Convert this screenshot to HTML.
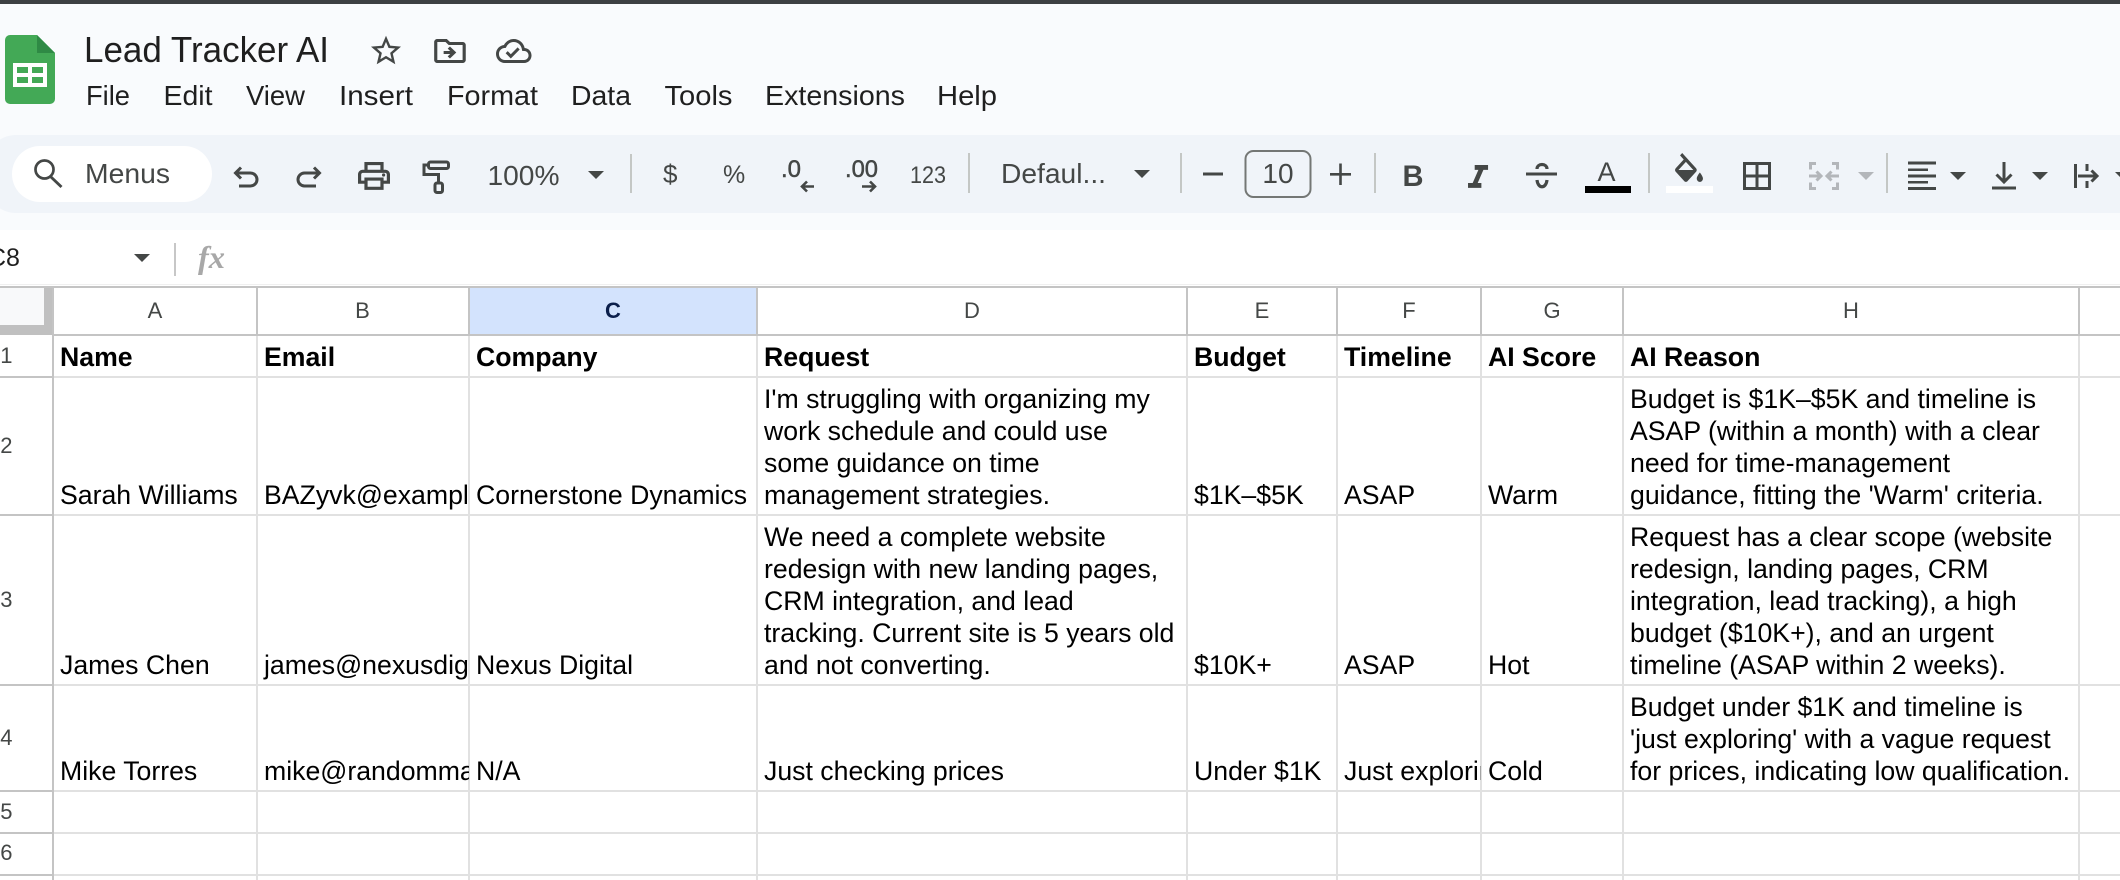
<!DOCTYPE html>
<html lang="en"><head><meta charset="utf-8"><title>Lead Tracker AI</title>
<style>
html,body{margin:0;padding:0;background:#fff;width:2120px;height:880px;overflow:hidden}
svg{display:block;position:absolute;left:0;top:0}
text{font-family:"Liberation Sans",Arial,sans-serif;white-space:pre}
.c{font-size:26.67px;fill:#000}
.b{font-weight:700}
.m{font-size:28px;fill:#1f1f1f}
.t{fill:#444746;font-size:28px}
.h{font-size:22px;fill:#444746;text-anchor:middle}
.r{font-size:22px;fill:#444746;text-anchor:end}
.i{fill:#444746}
.s{fill:none;stroke:#444746;stroke-width:3}
.g{fill:none;stroke:#b3b6ba;stroke-width:3}
</style></head><body>
<svg width="2120" height="880" viewBox="0 0 2120 880" xmlns="http://www.w3.org/2000/svg">
<defs>
<clipPath id="cb"><rect x="257" y="286" width="212" height="594"/></clipPath>
<clipPath id="cf"><rect x="1337" y="286" width="144" height="594"/></clipPath>
</defs>
<rect width="2120" height="880" fill="#fff"/>
<rect y="4" width="2120" height="226" fill="#f9fbfd"/>
<rect width="2120" height="4" fill="#3d4043"/>
<rect x="-14" y="135" width="2200" height="78" rx="30" fill="#f0f4f9"/>
<rect x="12" y="146" width="200" height="56" rx="28" fill="#fff"/>

<!-- logo -->
<path d="M10 35H37L55 53V99a5 5 0 0 1-5 5H10a5 5 0 0 1-5-5V40a5 5 0 0 1 5-5Z" fill="#43a956"/>
<path d="M37 35L55 53H37Z" fill="#2f8a45"/>
<path d="M13 63H47V87H13Z" fill="#fff"/>
<path d="M17 67H28V73H17ZM32 67H43V73H32ZM17 77H28V83H17ZM32 77H43V83H32Z" fill="#43a956"/>

<!-- title + menus -->
<text x="84" y="62" font-size="36" fill="#1f1f1f" textLength="245" lengthAdjust="spacingAndGlyphs">Lead Tracker AI</text>
<text class="m" x="86" y="105" textLength="44" lengthAdjust="spacingAndGlyphs">File</text>
<text class="m" x="163.500" y="105" textLength="49" lengthAdjust="spacingAndGlyphs">Edit</text>
<text class="m" x="246" y="105" textLength="59" lengthAdjust="spacingAndGlyphs">View</text>
<text class="m" x="339" y="105" textLength="74" lengthAdjust="spacingAndGlyphs">Insert</text>
<text class="m" x="447" y="105" textLength="91" lengthAdjust="spacingAndGlyphs">Format</text>
<text class="m" x="571" y="105" textLength="60" lengthAdjust="spacingAndGlyphs">Data</text>
<text class="m" x="664.500" y="105" textLength="68" lengthAdjust="spacingAndGlyphs">Tools</text>
<text class="m" x="765" y="105" textLength="140" lengthAdjust="spacingAndGlyphs">Extensions</text>
<text class="m" x="937" y="105" textLength="60" lengthAdjust="spacingAndGlyphs">Help</text>

<!-- title icons -->
<path class="i" transform="translate(368 32.75) scale(1.5)" d="M22 9.24l-7.19-.62L12 2 9.19 8.63 2 9.24l5.46 4.73L5.82 21 12 17.27 18.18 21l-1.63-7.03L22 9.24zM12 15.4l-3.76 2.27 1-4.28-3.32-2.88 4.38-.38L12 6.1l1.71 4.04 4.38.38-3.32 2.88 1 4.28L12 15.4z"/>
<path class="i" transform="translate(431 33) scale(1.58 1.5)" d="M20 6h-8l-2-2H4c-1.1 0-2 .9-2 2v12c0 1.1.9 2 2 2h16c1.1 0 2-.9 2-2V8c0-1.1-.9-2-2-2zm0 12H4V6h5.17l2 2H20v10zm-8.01-9l-1.41 1.41L12.16 12H8v2h4.16l-1.59 1.59L11.99 17 16 13.01 11.99 9z"/>
<path class="i" transform="translate(496 33) scale(1.48 1.5)" d="M19.35 10.04C18.67 6.59 15.64 4 12 4 9.11 4 6.6 5.64 5.35 8.04 2.34 8.36 0 10.91 0 14c0 3.31 2.69 6 6 6h13c2.76 0 5-2.24 5-5 0-2.64-2.05-4.78-4.65-4.96zM19 18H6c-2.21 0-4-1.79-4-4 0-2.05 1.53-3.76 3.56-3.97l1.07-.11.5-.95C8.08 7.14 9.94 6 12 6c2.62 0 4.88 1.86 5.39 4.43l.3 1.5 1.53.11c1.56.1 2.78 1.41 2.78 2.96 0 1.65-1.35 3-3 3zm-9-3.82l-2.09-2.09L6.5 13.5 10 17l6.01-6.01-1.41-1.41z"/>

<!-- toolbar -->
<circle cx="44.500" cy="169.500" r="9" fill="none" stroke="#444746" stroke-width="2.700"/>
<path class="s" d="M51 177l10.500 10" style="stroke-width:2.900"/>
<text class="t" x="85" y="183" textLength="85" lengthAdjust="spacingAndGlyphs">Menus</text>
<path class="s" d="M241 167.500l-5.500 5.500 5.500 5.500M236 173h14.500a6.500 6.500 0 0 1 0 13H239"/>
<path class="s" d="M314 167.500l5.500 5.500-5.500 5.500M319 173h-14.500a6.500 6.500 0 0 0 0 13H316"/>
<path class="i" transform="translate(354.8 157.35) scale(1.6 1.55)" d="M19 8h-1V3H6v5H5c-1.66 0-3 1.34-3 3v6h4v4h12v-4h4v-6c0-1.66-1.34-3-3-3zM8 5h8v3H8V5zm8 12v2H8v-4h8v2zm2-2v-2H6v2H4v-4c0-.55.45-1 1-1h14c.55 0 1 .45 1 1v4h-2z"/>
<circle class="i" cx="383.6" cy="175" r="1.6"/>
<rect class="s" x="428.500" y="162" width="20" height="6.500" rx="2"/>
<path class="s" d="M428 165h-4v9.500h14.500v8"/>
<rect class="s" x="435" y="183" width="7.500" height="9.500" rx="2"/>
<text class="t" x="487.500" y="185" textLength="72" lengthAdjust="spacingAndGlyphs">100%</text>
<path class="i" d="M588 171h16l-8 8Z"/>
<rect x="630" y="154" width="2" height="39" fill="#c4c7c5"/>
<text class="t" x="663" y="183" style="font-size:26px">$</text>
<text class="t" x="723" y="183" style="font-size:25px">%</text>
<text class="t" x="781" y="177" style="font-size:24px;stroke:#444746;stroke-width:.5" textLength="20" lengthAdjust="spacingAndGlyphs">.0</text>
<path class="s" d="M814 186.500h-12m5-5l-5 5 5 5" style="stroke-width:2.6"/>
<text class="t" x="845" y="177" style="font-size:24px;stroke:#444746;stroke-width:.5" textLength="33" lengthAdjust="spacingAndGlyphs">.00</text>
<path class="s" d="M862 186.500h13m-5-5l5 5-5 5" style="stroke-width:2.6"/>
<text class="t" x="910" y="183" style="font-size:24px" textLength="36" lengthAdjust="spacingAndGlyphs">123</text>
<rect x="968" y="153" width="2" height="40" fill="#c4c7c5"/>
<text class="t" x="1001" y="183" textLength="105" lengthAdjust="spacingAndGlyphs">Defaul...</text>
<path class="i" d="M1134 170h16l-8 8Z"/>
<rect x="1180" y="153" width="2" height="40" fill="#c4c7c5"/>
<rect class="i" x="1203" y="172.500" width="20" height="3"/>
<rect x="1245.500" y="151" width="65" height="46" rx="8" fill="none" stroke="#747775" stroke-width="2"/>
<text class="t" x="1278" y="183" text-anchor="middle">10</text>
<path class="i" d="M1330 173h9.200v-9.500h2.600v9.500h9.200v2.600h-9.200v9.400h-2.600v-9.400h-9.200Z"/>
<rect x="1374" y="153" width="2" height="40" fill="#c4c7c5"/>
<text class="t b" x="1402.500" y="186" style="font-size:30px;font-weight:700" textLength="21" lengthAdjust="spacingAndGlyphs">B</text>
<path class="i" transform="translate(1458 158.400) scale(1.67 1.64)" d="M10 4v3h2.21l-3.42 8H6v3h8v-3h-2.21l3.42-8H18V4z"/>
<path class="s" d="M1526 174h31"/>
<path class="s" d="M1537 169c0-6 10-6 10 0M1537 180c1 9 9 9 10 0" style="stroke-width:3.200"/>
<text class="t" x="1606.500" y="181" text-anchor="middle" style="font-size:27px">A</text>
<rect x="1585" y="186" width="46" height="7" fill="#000"/>
<rect x="1648" y="153" width="2" height="40" fill="#c4c7c5"/>
<path class="i" transform="translate(1670.400 153) scale(1.55 1.7)" d="M16.56 8.94L7.62 0 6.21 1.41l2.38 2.38-5.15 5.15c-.59.59-.59 1.54 0 2.12l5.5 5.5c.29.29.68.44 1.06.44s.77-.15 1.06-.44l5.500-5.500c.59-.58.59-1.53 0-2.12zM5.21 10L10 5.21 14.79 10H5.21zM19 11.5s-2 2.17-2 3.5c0 1.1.9 2 2 2s2-.9 2-2c0-1.33-2-3.5-2-3.5z"/>
<rect x="1666" y="186" width="47" height="7" fill="#fff"/>
<path class="s" d="M1744.500 163.500h25v25h-25zM1757 163.500v25M1744.500 176h25"/>
<path class="g" d="M1816 163.500h-5.500v6M1816 188.500h-5.500v-6M1832 163.500h5.500v6M1832 188.500h5.500v-6M1809 176h12m-4.500-4.500l4.500 4.500-4.500 4.500M1839 176h-12m4.500-4.500l-4.500 4.500 4.500 4.500"/>
<path d="M1858 172h16l-8 8Z" fill="#b3b6ba"/>
<rect x="1886" y="153" width="2" height="40" fill="#c4c7c5"/>
<path class="i" d="M1908 161.500h28v3h-28ZM1908 168.500h20v2.500h-20ZM1908 174.500h28v3h-28ZM1908 181h20v2.500h-20ZM1908 187h28v3h-28Z"/>
<path class="i" d="M1950 172h16l-8 8Z"/>
<path class="s" d="M2004 162v20m-7.500-7.500l7.500 7.500 7.500-7.500"/>
<rect class="i" x="1992" y="186.500" width="24" height="3"/>
<path class="i" d="M2032 172h16l-8 8Z"/>
<rect class="i" x="2074" y="164" width="3" height="24"/>
<path class="s" d="M2087 164v7M2087 181v7"/>
<path class="s" d="M2078 176h19m-5.500-5.500l5.500 5.500-5.500 5.500"/>
<path class="i" d="M2115 172h16l-8 8Z"/>

<!-- formula bar -->
<text x="-12" y="266" font-size="25" fill="#1f1f1f">C8</text>
<path class="i" d="M134 254h16l-8 8Z"/>
<rect x="174" y="243" width="2" height="33" fill="#c7c7c7"/>
<text x="198" y="268" font-size="32" font-style="italic" font-weight="700" fill="#a8a8a8" style="font-family:'Liberation Serif',serif" textLength="27" lengthAdjust="spacingAndGlyphs">fx</text>

<!-- grid header -->
<rect x="0" y="284" width="2120" height="1" fill="#f0f0f0"/>
<rect x="0" y="288" width="44" height="37" fill="#f8f9fa"/>
<rect x="44" y="288" width="9" height="47" fill="#c0c0c0"/>
<rect x="0" y="325" width="53" height="10" fill="#c0c0c0"/>
<rect x="469" y="288" width="288" height="47" fill="#d3e3fd"/>

<!-- grid lines -->
<g fill="#e1e1e1">
<rect x="53" y="376" width="2067" height="2"/>
<rect x="53" y="514" width="2067" height="2"/>
<rect x="53" y="684" width="2067" height="2"/>
<rect x="53" y="790" width="2067" height="2"/>
<rect x="53" y="832" width="2067" height="2"/>
<rect x="53" y="874" width="2067" height="2"/>
<rect x="256" y="335" width="2" height="545"/>
<rect x="468" y="335" width="2" height="545"/>
<rect x="756" y="335" width="2" height="545"/>
<rect x="1186" y="335" width="2" height="545"/>
<rect x="1336" y="335" width="2" height="545"/>
<rect x="1480" y="335" width="2" height="545"/>
<rect x="1622" y="335" width="2" height="545"/>
<rect x="2078" y="335" width="2" height="545"/>
</g>
<g fill="#c4c4c4">
<rect x="0" y="286" width="2120" height="2"/>
<rect x="53" y="334" width="2067" height="2"/>
<rect x="52" y="287" width="2" height="593"/>
<rect x="256" y="287" width="2" height="48"/>
<rect x="468" y="287" width="2" height="48"/>
<rect x="756" y="287" width="2" height="48"/>
<rect x="1186" y="287" width="2" height="48"/>
<rect x="1336" y="287" width="2" height="48"/>
<rect x="1480" y="287" width="2" height="48"/>
<rect x="1622" y="287" width="2" height="48"/>
<rect x="2078" y="287" width="2" height="48"/>
<rect x="0" y="376" width="53" height="2"/>
<rect x="0" y="514" width="53" height="2"/>
<rect x="0" y="684" width="53" height="2"/>
<rect x="0" y="790" width="53" height="2"/>
<rect x="0" y="832" width="53" height="2"/>
<rect x="0" y="874" width="53" height="2"/>
</g>

<!-- column letters -->
<text class="h" x="155" y="318">A</text>
<text class="h" x="362.500" y="318">B</text>
<text class="h b" x="613" y="318" style="fill:#0b1f4b">C</text>
<text class="h" x="972" y="318">D</text>
<text class="h" x="1262" y="318">E</text>
<text class="h" x="1409" y="318">F</text>
<text class="h" x="1552" y="318">G</text>
<text class="h" x="1851" y="318">H</text>

<!-- row numbers -->
<text class="r" x="12.500" y="363">1</text>
<text class="r" x="12.500" y="453">2</text>
<text class="r" x="12.500" y="607">3</text>
<text class="r" x="12.500" y="745">4</text>
<text class="r" x="12.500" y="819">5</text>
<text class="r" x="12.500" y="860">6</text>

<!-- header row -->
<text class="c b" x="60" y="366">Name</text>
<text class="c b" x="264" y="366">Email</text>
<text class="c b" x="476" y="366">Company</text>
<text class="c b" x="764" y="366">Request</text>
<text class="c b" x="1194" y="366">Budget</text>
<text class="c b" x="1344" y="366">Timeline</text>
<text class="c b" x="1488" y="366">AI Score</text>
<text class="c b" x="1630" y="366">AI Reason</text>

<!-- row 2 -->
<text class="c" x="60" y="504">Sarah Williams</text>
<g clip-path="url(#cb)"><text class="c" x="264" y="504">BAZyvk@example.com</text></g>
<text class="c" x="476" y="504">Cornerstone Dynamics</text>
<text class="c" x="764" y="408">I'm struggling with organizing my</text>
<text class="c" x="764" y="440">work schedule and could use</text>
<text class="c" x="764" y="472">some guidance on time</text>
<text class="c" x="764" y="504">management strategies.</text>
<text class="c" x="1194" y="504">$1K–$5K</text>
<text class="c" x="1344" y="504">ASAP</text>
<text class="c" x="1488" y="504">Warm</text>
<text class="c" x="1630" y="408">Budget is $1K–$5K and timeline is</text>
<text class="c" x="1630" y="440">ASAP (within a month) with a clear</text>
<text class="c" x="1630" y="472">need for time-management</text>
<text class="c" x="1630" y="504">guidance, fitting the 'Warm' criteria.</text>

<!-- row 3 -->
<text class="c" x="60" y="674">James Chen</text>
<g clip-path="url(#cb)"><text class="c" x="264" y="674">james@nexusdigital.com</text></g>
<text class="c" x="476" y="674">Nexus Digital</text>
<text class="c" x="764" y="546">We need a complete website</text>
<text class="c" x="764" y="578">redesign with new landing pages,</text>
<text class="c" x="764" y="610">CRM integration, and lead</text>
<text class="c" x="764" y="642">tracking. Current site is 5 years old</text>
<text class="c" x="764" y="674">and not converting.</text>
<text class="c" x="1194" y="674">$10K+</text>
<text class="c" x="1344" y="674">ASAP</text>
<text class="c" x="1488" y="674">Hot</text>
<text class="c" x="1630" y="546">Request has a clear scope (website</text>
<text class="c" x="1630" y="578">redesign, landing pages, CRM</text>
<text class="c" x="1630" y="610">integration, lead tracking), a high</text>
<text class="c" x="1630" y="642">budget ($10K+), and an urgent</text>
<text class="c" x="1630" y="674">timeline (ASAP within 2 weeks).</text>

<!-- row 4 -->
<text class="c" x="60" y="780">Mike Torres</text>
<g clip-path="url(#cb)"><text class="c" x="264" y="780">mike@randommail.com</text></g>
<text class="c" x="476" y="780">N/A</text>
<text class="c" x="764" y="780">Just checking prices</text>
<text class="c" x="1194" y="780">Under $1K</text>
<g clip-path="url(#cf)"><text class="c" x="1344" y="780">Just exploring</text></g>
<text class="c" x="1488" y="780">Cold</text>
<text class="c" x="1630" y="716">Budget under $1K and timeline is</text>
<text class="c" x="1630" y="748">'just exploring' with a vague request</text>
<text class="c" x="1630" y="780">for prices, indicating low qualification.</text>
</svg>
</body></html>
